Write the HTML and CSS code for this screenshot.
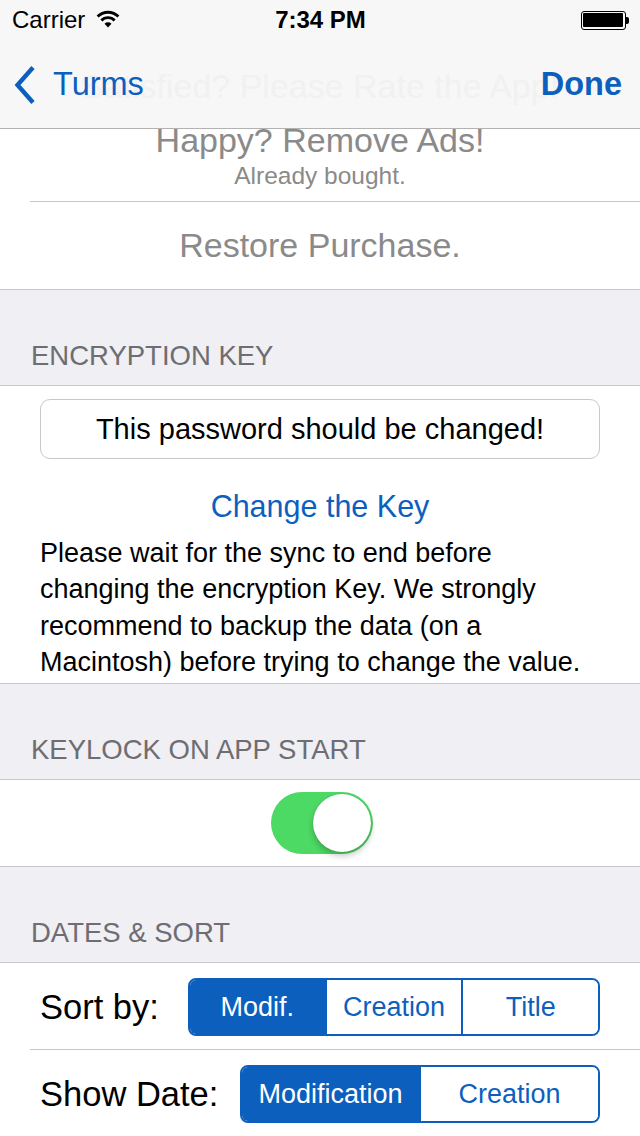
FILE: index.html
```html
<!DOCTYPE html>
<html>
<head>
<meta charset="utf-8">
<link rel="stylesheet" href="styles.css">
</head>
<body>
<div class="top">
  <div class="status">
    <div class="status-left">
      <span class="carrier">Carrier</span>
      <svg class="wifi" width="24" height="18" viewBox="0 0 24 18">
        <path d="M1.6 6.6 A14.6 14.6 0 0 1 22.4 6.6" fill="none" stroke="#000" stroke-width="2.8"/>
        <path d="M5.4 10.5 A9.2 9.2 0 0 1 18.6 10.5" fill="none" stroke="#000" stroke-width="2.8"/>
        <path d="M12 17.4 L8.5 13.8 A4.9 4.9 0 0 1 15.5 13.8 Z" fill="#000"/>
      </svg>
    </div>
    <span class="time">7:34 PM</span>
    <div class="status-right">
      <div class="battery"><div class="battery-fill"></div></div>
      <div class="battery-nub"></div>
    </div>
  </div>
  <div class="nav">
    <span class="ghost">Satisfied? Please Rate the App!</span>
    <div class="back">
      <svg class="chevron" width="22" height="40" viewBox="0 0 22 40">
        <path d="M19 2.5 L3.5 20 L19 37.5" fill="none" stroke="#0d5fbe" stroke-width="4.4"/>
      </svg>
      <span class="back-label">Turms</span>
    </div>
    <span class="done">Done</span>
  </div>
</div>

<div class="group group-first">
  <div class="cell cell-ads">
    <div class="ads-title">Happy? Remove Ads!</div>
    <div class="ads-sub">Already bought.</div>
  </div>
  <div class="sep"></div>
  <div class="cell cell-restore">Restore Purchase.</div>
</div>

<div class="header">ENCRYPTION KEY</div>
<div class="group group-key">
  <div class="field">This password should be changed!</div>
  <div class="link">Change the Key</div>
  <p class="note">Please wait for the sync to end before changing the encryption Key. We strongly recommend to backup the data (on a Macintosh) before trying to change the value.</p>
</div>

<div class="header">KEYLOCK ON APP START</div>
<div class="group group-lock">
  <div class="toggle"><div class="knob"></div></div>
</div>

<div class="header">DATES &amp; SORT</div>
<div class="group group-sort">
  <div class="row row-first">
    <span class="row-label">Sort by:</span>
    <div class="seg seg-sort">
      <span class="seg-item on">Modif.</span>
      <span class="seg-item">Creation</span>
      <span class="seg-item">Title</span>
    </div>
  </div>
  <div class="sep"></div>
  <div class="row">
    <span class="row-label">Show Date:</span>
    <div class="seg seg-date">
      <span class="seg-item on">Modification</span>
      <span class="seg-item">Creation</span>
    </div>
  </div>
</div>
</body>
</html>
```
FILE: styles.css
```css
* { box-sizing: border-box; }
html, body {
  margin: 0;
  padding: 0;
  background: #efeff4;
  font-family: "Liberation Sans", Arial, sans-serif;
  width: 640px;
  height: 1136px;
  overflow: hidden;
}
.top {
  background: #f7f7f7;
  position: relative;
  z-index: 2;
}
.status {
  height: 40px;
  display: flex;
  align-items: center;
  justify-content: space-between;
  padding: 0 11px 0 12px;
}
.status-left {
  display: flex;
  align-items: center;
  gap: 11px;
  width: 154px;
}
.carrier {
  font-size: 24px;
  line-height: 40px;
  color: #000;
}
.wifi { display: block; margin-top: -2px; }
.time {
  font-size: 24px;
  font-weight: bold;
  color: #000;
  line-height: 40px;
}
.status-right {
  width: 154px;
  display: flex;
  justify-content: flex-end;
  align-items: center;
}
.battery {
  width: 45px;
  height: 19px;
  border: 1.5px solid #000;
  border-radius: 3px;
  padding: 1.5px;
}
.battery-fill {
  width: 100%;
  height: 100%;
  background: #000;
  border-radius: 1px;
}
.battery-nub {
  width: 3px;
  height: 7px;
  background: #000;
  border-radius: 0 2px 2px 0;
}
.nav {
  height: 89px;
  border-bottom: 1px solid #b2b2b2;
  display: flex;
  align-items: center;
  justify-content: space-between;
  padding: 0 18px 0 14px;
  position: relative;
}
.ghost {
  position: absolute;
  left: 0;
  right: 0;
  top: 26px;
  text-align: center;
  font-size: 34px;
  line-height: 40px;
  color: #f1f1f1;
  white-space: nowrap;
}
.back {
  display: flex;
  align-items: center;
  gap: 17px;
  position: relative;
}
.chevron { display: block; margin-top: 1px; }
.back-label {
  font-size: 32.5px;
  color: #0d5fbe;
}
.done {
  font-size: 32.5px;
  font-weight: bold;
  color: #0d5fbe;
  position: relative;
}
.group {
  background: #fff;
  border-top: 1px solid #c8c7cc;
  border-bottom: 1px solid #c8c7cc;
}
.group-first { border-top: none; }
.sep {
  height: 1px;
  margin-left: 30px;
  background: #c8c7cc;
}
.cell-ads {
  height: 72px;
  overflow: hidden;
  text-align: center;
  color: #8a8a8a;
}
.ads-title {
  font-size: 34px;
  line-height: 34px;
  margin-top: -6px;
}
.ads-sub {
  font-size: 24.5px;
  line-height: 30px;
  margin-top: 4px;
}
.cell-restore {
  height: 87px;
  line-height: 87px;
  text-align: center;
  font-size: 34px;
  color: #8a8a8a;
}
.header {
  padding: 52px 31px 15px;
  font-size: 27.5px;
  line-height: 28px;
  color: #6d6d72;
}
.group-key {
  padding: 13px 40px 3px;
}
.field {
  height: 60px;
  border: 1px solid #c7c7cc;
  border-radius: 10px;
  text-align: center;
  font-size: 29px;
  line-height: 58px;
  color: #000;
}
.link {
  margin-top: 29px;
  text-align: center;
  font-size: 30.5px;
  line-height: 36px;
  color: #0d5fbe;
}
.note {
  margin: 11px 0 0;
  font-size: 27px;
  line-height: 36.25px;
  color: #000;
}
.group-lock {
  height: 88px;
  display: flex;
  align-items: center;
  justify-content: center;
  padding-left: 3px;
}
.toggle {
  width: 102px;
  height: 62px;
  border-radius: 31px;
  background: #4cd964;
  display: flex;
  justify-content: flex-end;
  align-items: center;
  padding: 0 2px 1px;
}
.knob {
  width: 58px;
  height: 58px;
  border-radius: 50%;
  background: #fff;
  box-shadow: 0 4px 6px rgba(0, 0, 0, 0.22), 0 0 1px rgba(0, 0, 0, 0.3);
}
.row {
  height: 86px;
  display: flex;
  align-items: center;
  justify-content: space-between;
  padding: 2px 40px 0;
}
.row-label {
  font-size: 34.5px;
  color: #000;
}
.seg {
  display: flex;
  height: 58px;
  border: 2px solid #0d5fbe;
  border-radius: 8px;
  overflow: hidden;
}
.seg-sort { width: 412px; }
.seg-date { width: 360px; }
.seg-item {
  flex: 1;
  display: flex;
  align-items: center;
  justify-content: center;
  font-size: 27px;
  color: #0d5fbe;
  background: #fff;
}
.seg-item + .seg-item { border-left: 2px solid #0d5fbe; }
.seg-item.on {
  background: #0d5fbe;
  color: #fff;
}
```
